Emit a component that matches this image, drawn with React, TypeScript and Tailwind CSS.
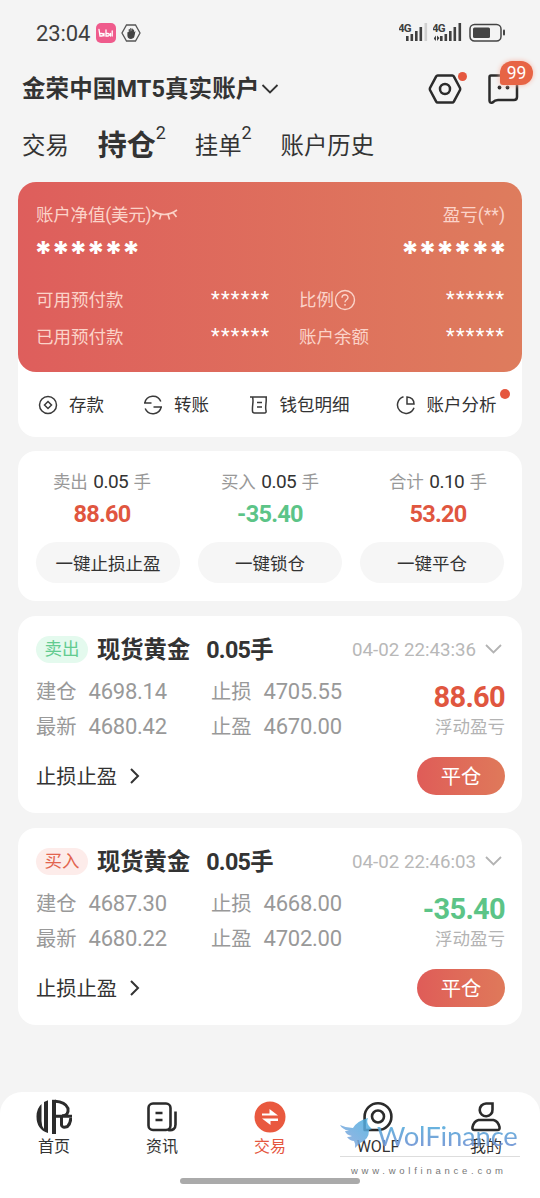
import type { ReactNode } from "react";

const stats = [
  { label: "卖出", lots: "0.05", value: "88.60", color: "text-[#e0563f]", action: "一键止损止盈" },
  { label: "买入", lots: "0.05", value: "-35.40", color: "text-[#5cc487]", action: "一键锁仓" },
  { label: "合计", lots: "0.10", value: "53.20", color: "text-[#e0563f]", action: "一键平仓" },
];

const positions = [
  {
    side: "卖出",
    badge: "bg-[#e4faee] text-[#62cb90]",
    time: "04-02 22:43:36",
    open: "4698.14",
    last: "4680.42",
    stop: "4705.55",
    take: "4670.00",
    profit: "88.60",
    color: "text-[#e0563f]",
  },
  {
    side: "买入",
    badge: "bg-[#fdecea] text-[#e2644f]",
    time: "04-02 22:46:03",
    open: "4687.30",
    last: "4680.22",
    stop: "4668.00",
    take: "4702.00",
    profit: "-35.40",
    color: "text-[#5cc487]",
  },
];

function Signal({ weak }: { weak?: boolean }) {
  return (
    <svg width="29" height="22" viewBox="0 0 29 22" fill="#3f3f3f">
      <text x="-1" y="9.500" fontSize="11.500" fontWeight="700" fontFamily="Roboto" textLength="13.500">
        4G
      </text>
      {!weak && <path d="M1 16l2-2.600V19L1 17zM4 13.400L6.500 16 4 19z" />}
      <rect x="7" y="14" width="2.600" height="5" />
      <rect x="11.500" y="12" width="2.600" height="7" />
      <rect x="16" y="9" width="2.600" height="10" />
      <rect x="20.500" y="5" width="2.600" height="14" />
      <rect x="25.500" y="1" width="2.600" height="18" fill={weak ? "#d0d0d0" : "#3f3f3f"} />
    </svg>
  );
}

function StatusBar() {
  return (
    <div className="flex h-[66px] items-center pl-9 pr-[34px] text-[#3f3f3f]">
      <span className="w-[60px] text-[22px] tracking-[-0.100px]">23:04</span>
      <svg width="20" height="20" viewBox="0 0 20 20">
        <rect width="20" height="20" rx="5" fill="#ef5b8c" />
        <g fill="none" stroke="#fff" strokeWidth="1.300" strokeLinecap="round">
          <path d="M3 6.500l1 6.500h2a1 1 0 0 0 0-2.500H4M8 10.500V13M10 7v6h2a1 1 0 0 0 0-2.500h-2M14.500 10.500V13M16.200 8v5" />
        </g>
      </svg>
      <svg className="ml-[5px]" width="20" height="18" viewBox="0 0 20 18">
        <path d="M5.500 1h9L19 9l-4.500 8h-9L1 9z" fill="none" stroke="#555" strokeWidth="1.300" />
        <path
          d="M7 8.500V11.500c0 1.800 1.200 2.800 3 2.800s2.800-1.200 3-2.800l.6-3-1.100.8V6M8.300 10V5.500M9.800 10V4.500M11.300 10V5"
          fill="#444"
          stroke="#444"
          strokeWidth="1.200"
          strokeLinecap="round"
        />
      </svg>
      <div className="ml-auto flex items-center gap-[5px]">
        <Signal weak />
        <Signal />
        <svg className="ml-0.5" width="37" height="20" viewBox="0 0 37 20">
          <rect x="1" y="1.500" width="31" height="16.500" rx="4.500" fill="none" stroke="#444" strokeWidth="1.500" />
          <rect x="4" y="4.500" width="17" height="10.500" rx="1.500" fill="#444" />
          <rect x="34" y="6.500" width="2" height="6" rx="1" fill="#444" />
        </svg>
      </div>
    </div>
  );
}

function Header() {
  return (
    <div className="flex h-[46px] items-center pl-[22px] pr-[20px]">
      <h1 className="pt-[2px] text-[23.500px] font-bold tracking-[0.100px] whitespace-nowrap">金荣中国MT5真实账户</h1>
      <svg className="ml-[2px]" width="18" height="12" viewBox="0 0 18 12" fill="none" stroke="#333" strokeWidth="1.800">
        <path d="M1.500 2L9 9.500 16.500 2" />
      </svg>
      <div className="relative ml-auto">
        <svg width="34" height="32" viewBox="0 0 34 32" fill="none" stroke="#2b2b2b" strokeWidth="2.500">
          <path d="M9.700 2.500h14.600q1 0 1.500.9L32 15q.4 1 0 2l-6.200 11.600q-.5.900-1.500.9H9.700q-1 0-1.500-.9L2 17q-.4-1 0-2L8.200 3.400q.5-.9 1.500-.9z" />
          <circle cx="17" cy="16" r="5" />
        </svg>
        <span className="absolute -right-[5px] -top-px size-[9px] rounded-full bg-[#e5573f]" />
      </div>
      <div className="relative ml-6">
        <svg width="34" height="32" viewBox="0 0 34 32" fill="none" stroke="#2b2b2b" strokeWidth="2.500">
          <path
            d="M5 2.500h23q3 0 3 3v18.500q0 3-3 3H12q-3 0-5.500 2.500-3 1-3-2V4q0-1.500 1.500-1.500z"
            strokeLinejoin="round"
          />
          <circle cx="13.500" cy="14.500" r="1.900" fill="#2b2b2b" stroke="none" />
          <circle cx="21.500" cy="14.500" r="1.900" fill="#2b2b2b" stroke="none" />
        </svg>
        <span className="absolute -right-[13px] -top-[12px] flex h-[24px] w-[33px] items-center justify-center rounded-[12px] rounded-bl-[3px] bg-[#e76445] text-[17.500px] text-white shadow-[0_0_5px_#f5b5a5]">
          99
        </span>
      </div>
    </div>
  );
}

function Tabs() {
  return (
    <div className="flex h-[70px] items-start pl-[22px] pt-[16px] text-[23.400px] leading-[36px] whitespace-nowrap">
      <span>交易</span>
      <span className="relative ml-[29px] text-[29px] font-bold">
        持仓
        <sup className="absolute -right-[10px] -top-[9px] text-[18px] font-normal leading-[28px]">2</sup>
      </span>
      <span className="relative ml-[39px]">
        挂单
        <sup className="absolute -right-[10px] -top-[9px] text-[18px] leading-[28px]">2</sup>
      </span>
      <span className="ml-[39px]">账户历史</span>
    </div>
  );
}

function Mask() {
  return (
    <span className="block h-[24px] w-[60px] text-[20px] leading-[22px] tracking-[1.300px] text-white">******</span>
  );
}

function MarginRow({ label, side, help }: { label: string; side: string; help?: boolean }) {
  return (
    <div className="flex h-[37px] items-center">
      <span className="w-[175px] pt-[2px]">{label}</span>
      <Mask />
      <span className="ml-[28px] flex items-center pt-[2px]">
        {side}
        {help && (
          <svg className="-mt-px" width="22" height="22" viewBox="0 0 22 22" fill="none" stroke="currentColor" strokeWidth="1.400">
            <circle cx="11" cy="11" r="9.500" />
            <path d="M8 8.800c0-4 6-4 6-.3 0 2.300-3 2.200-3 4.800M11 15v1.800" />
          </svg>
        )}
      </span>
      <span className="ml-auto">
        <Mask />
      </span>
    </div>
  );
}

function Quick({ label, children }: { label: string; children: ReactNode }) {
  return (
    <div className="flex items-center gap-[11px] whitespace-nowrap">
      <svg width="20" height="20" viewBox="0 0 20 20" fill="none" stroke="#3a3a3a" strokeWidth="1.500">
        {children}
      </svg>
      <span className="pt-[2px]">{label}</span>
    </div>
  );
}

function Account() {
  return (
    <section className="h-[255px] rounded-[18px] bg-white">
      <div className="h-[190px] rounded-[18px] bg-linear-to-r from-[#de5e5c] to-[#de7c5d] pl-[18px] pr-[16px] pt-[20px] text-[17.500px] text-[#fbd3c9]">
        <div className="flex h-[26px] items-center">
          <span className="tracking-[-0.200px]">账户净值(美元)</span>
          <svg width="27" height="14" viewBox="0 0 27 14" fill="none" stroke="currentColor" strokeWidth="1.600">
            <path d="M1 2q12 9 25 0M5 4.500L1.500 9M10 6.500L8.500 11.500M17 6.500l1.500 5M22 4.500L25.500 9" />
          </svg>
          <span className="ml-auto pr-px">盈亏(**)</span>
        </div>
        <div className="flex h-[44px] justify-between font-[Inter] text-[32px] font-extrabold leading-[52px] tracking-[-1.100px] text-white">
          <span className="-ml-[2px]">******</span>
          <span>******</span>
        </div>
        <div className="mt-[9px]">
          <MarginRow label="可用预付款" side="比例" help />
          <MarginRow label="已用预付款" side="账户余额" />
        </div>
      </div>
      <div className="flex h-[65px] items-center pl-[20px] text-[17.500px]">
        <Quick label="存款">
          <circle cx="10" cy="10" r="8.500" />
          <path d="M10 6.500l3.500 3.500-3.500 3.500L6.500 10z" />
        </Quick>
        <span className="w-[39px]" />
        <Quick label="转账">
          <path d="M1 8h7.500M1.800 8a8.400 8.400 0 0 1 16-1.500M19 12h-8.500M18.200 12a8.400 8.400 0 0 1-16 1.500" />
        </Quick>
        <span className="w-[39.500px]" />
        <Quick label="钱包明细">
          <path d="M1 2h17M3.500 2c1.500 4-.5 8 0 14q0 2 2 2h10q2 0 1.500-2.500c-1.200-4 1-9 0-13.500M8 7.500h5M8 12h5" />
        </Quick>
        <span className="w-[46px]" />
        <div className="relative">
          <Quick label="账户分析">
            <path d="M7.500 1.800a8.500 8.500 0 1 0 10.500 11M11 2v7h7q0-6.500-7-7z" />
          </Quick>
          <span className="absolute -right-[13px] -top-px size-[9.500px] rounded-full bg-[#e5573f]" />
        </div>
      </div>
    </section>
  );
}

function Summary() {
  return (
    <section className="mt-[14px] h-[150px] rounded-[18px] bg-white pt-[17px]">
      <div className="grid grid-cols-3 text-center">
        {stats.map((s) => (
          <div key={s.label}>
            <p className="h-[28px] text-[17.500px] leading-[28px] text-[#999]">
              {s.label} <span className="mx-[1px] text-[19px] tracking-[-0.500px] text-[#333]">{s.lots}</span> 手
            </p>
            <p className={`h-[34px] text-[23.500px] font-bold leading-[36px] tracking-[-0.700px] ${s.color}`}>{s.value}</p>
          </div>
        ))}
      </div>
      <div className="mt-[12px] grid grid-cols-3 gap-[18px] pl-[18px] pr-[18px]">
        {stats.map((s) => (
          <button key={s.action} className="h-[41px] rounded-full bg-[#f6f6f6] pt-[3px] text-[17.500px]">
            {s.action}
          </button>
        ))}
      </div>
    </section>
  );
}

function Quote({ label, value }: { label: string; value: string }) {
  return (
    <div className="flex h-[35px] w-[175px] items-center gap-[12px] text-[20.300px] text-[#999]">
      <span className="pt-[3px]">{label}</span>
      <span className="pt-px text-[22px] tracking-[-0.250px]">{value}</span>
    </div>
  );
}

function Position({ item }: { item: (typeof positions)[number] }) {
  return (
    <section className="mt-[15px] h-[197px] rounded-[18px] bg-white pl-[18px] pr-[17px] pt-[15px]">
      <div className="flex h-[36px] items-center whitespace-nowrap">
        <span className={`flex h-[27px] w-[52px] items-center justify-center rounded-full pt-px text-[17.500px] ${item.badge}`}>
          {item.side}
        </span>
        <h2 className="ml-[9px] pt-[2px] text-[23.300px] font-bold">现货黄金</h2>
        <span className="ml-[16px] pt-[2px] text-[23.300px] font-bold tracking-[-0.700px]">0.05手</span>
        <span className="ml-auto pt-[2px] text-[18.700px] text-[#b8b8b8]">{item.time}</span>
        <svg className="ml-[9px] mr-[3px]" width="17" height="10" viewBox="0 0 17 10" fill="none" stroke="#b3b3b3" strokeWidth="1.800">
          <path d="M1 1l7.500 7.500L16 1" />
        </svg>
      </div>
      <div className="mt-[6px] flex justify-between">
        <div className="grid grid-cols-[175px_175px]">
          <Quote label="建仓" value={item.open} />
          <Quote label="止损" value={item.stop} />
          <Quote label="最新" value={item.last} />
          <Quote label="止盈" value={item.take} />
        </div>
        <div className="text-right">
          <p className={`h-[41px] text-[29px] font-bold leading-[48px] tracking-[-0.700px] ${item.color}`}>{item.profit}</p>
          <p className="text-[17.500px] leading-[26px] text-[#b3b3b3]">浮动盈亏</p>
        </div>
      </div>
      <div className="mt-[14px] flex h-[38px] items-center">
        <span className="pt-[2px] text-[20.300px]">止损止盈</span>
        <svg className="ml-[13px]" width="10" height="16" viewBox="0 0 10 16" fill="none" stroke="#333" strokeWidth="2">
          <path d="M1 1l7 7-7 7" />
        </svg>
        <button className="ml-auto h-[38px] w-[88px] rounded-full bg-linear-to-r from-[#df5c58] to-[#df795a] pt-[2px] text-[20.300px] text-white">
          平仓
        </button>
      </div>
    </section>
  );
}

function Tab({ label, active, children }: { label: string; active?: boolean; children: ReactNode }) {
  return (
    <div className={`flex flex-col items-center pt-[7px] text-[16px] leading-[24px] ${active ? "text-[#e5573f]" : ""}`}>
      <svg width="36" height="36" viewBox="0 0 36 36" fill="none" stroke="#2b2b2b" strokeWidth="2.600">
        {children}
      </svg>
      <span>{label}</span>
    </div>
  );
}

function Watermark() {
  return (
    <div className="absolute left-[340px] top-[22px] w-[180px]">
      <div className="flex h-[43px] items-start border-b border-[#ddd]">
        <svg className="mt-[4px] shrink-0" width="32" height="31" viewBox="0 0 32 31">
          <defs>
            <linearGradient id="bird" x1="0" y1="1" x2="1" y2="0">
              <stop offset="0" stopColor="#8fa5dc" />
              <stop offset="1" stopColor="#45afe0" />
            </linearGradient>
          </defs>
          <path
            d="M0 7q6 3 13 3Q17 3 28 0q-2 4 1 8l3 3-3 1q0 10-9 13l-5 5q1-4-1-7-4 0-7-4 3 0 5-1-6-1-7-5l4 0Q2 11 0 7z"
            fill="url(#bird)"
            opacity=".85"
          />
        </svg>
        <span className="ml-[5px] mt-[3px] bg-linear-to-b from-[#45b7e0] to-[#7488cf] bg-clip-text font-[Lato] text-[27.500px] leading-[38px] tracking-[-0.200px] text-transparent opacity-90">
          WolFinance
        </span>
      </div>
      <p className="whitespace-nowrap pl-[11px] pt-[7px] font-['Liberation_Sans'] text-[9.500px] leading-[14px] tracking-[3.750px] text-[#777]">
        www.wolfinance.com
      </p>
    </div>
  );
}

function BottomNav() {
  return (
    <nav className="relative mt-auto h-[106px] rounded-t-[22px] bg-white">
      <div className="grid grid-cols-5">
        <Tab label="首页">
          <g stroke="none" fill="#2b2b2b">
            <path d="M5.500 5v17q0 5 2.500 8V3l4-1.800V34Q.5 30.500.5 17.500.5 9.500 5.500 5z" />
            <path d="M16 .8h4V35h-4z" />
          </g>
          <path d="M19 2.300q10 .5 13 7 1 7.500-6 7.500M19 17.300h17" strokeWidth="3" />
          <path d="M25.500 17v9q.5 3.500 6 1.500 3-3 3.300-8.500" strokeWidth="3" />
        </Tab>
        <Tab label="资讯">
          <rect x="4.500" y="4.500" width="22" height="26.500" rx="4.500" />
          <path d="M11.500 14h7M11.500 21h7M24 31q7.500 1 7.500-5.500V12.500" />
        </Tab>
        <Tab label="交易" active>
          <circle cx="18" cy="18" r="15.500" fill="#e9593f" stroke="none" />
          <path
            d="M10 14.500h7.500v-4.500l8.500 6.500H10zM26 19.500H10l8.500 6.500v-4H26z"
            fill="#fff"
            stroke="none"
          />
        </Tab>
        <Tab label="WOLF">
          <path d="M4.600 31V17.500A13.400 13.400 0 1 1 18 31z" strokeLinejoin="round" />
          <circle cx="18" cy="17.500" r="6" />
        </Tab>
        <Tab label="我的">
          <path d="M18 4.500h6.500v6a6.400 6.400 0 1 1-6.500-6z" />
          <path d="M10.500 21h15q4.500 1 6 7 .5 3-2 3h-23q-2.500 0-2-3 1.500-6 6-7z" />
        </Tab>
      </div>
      <Watermark />
      <div className="mx-auto mt-[19px] h-[6px] w-[180px] rounded-full bg-[#aaa]" />
    </nav>
  );
}

export default function App() {
  return (
    <div className="flex h-[1198px] w-[540px] flex-col overflow-hidden bg-[#f4f4f4] font-[Roboto,'Noto_Sans_CJK_SC',sans-serif] text-[#333]">
      <StatusBar />
      <Header />
      <Tabs />
      <main className="px-[18px]">
        <Account />
        <Summary />
        {positions.map((p) => (
          <Position key={p.time} item={p} />
        ))}
      </main>
      <BottomNav />
    </div>
  );
}
